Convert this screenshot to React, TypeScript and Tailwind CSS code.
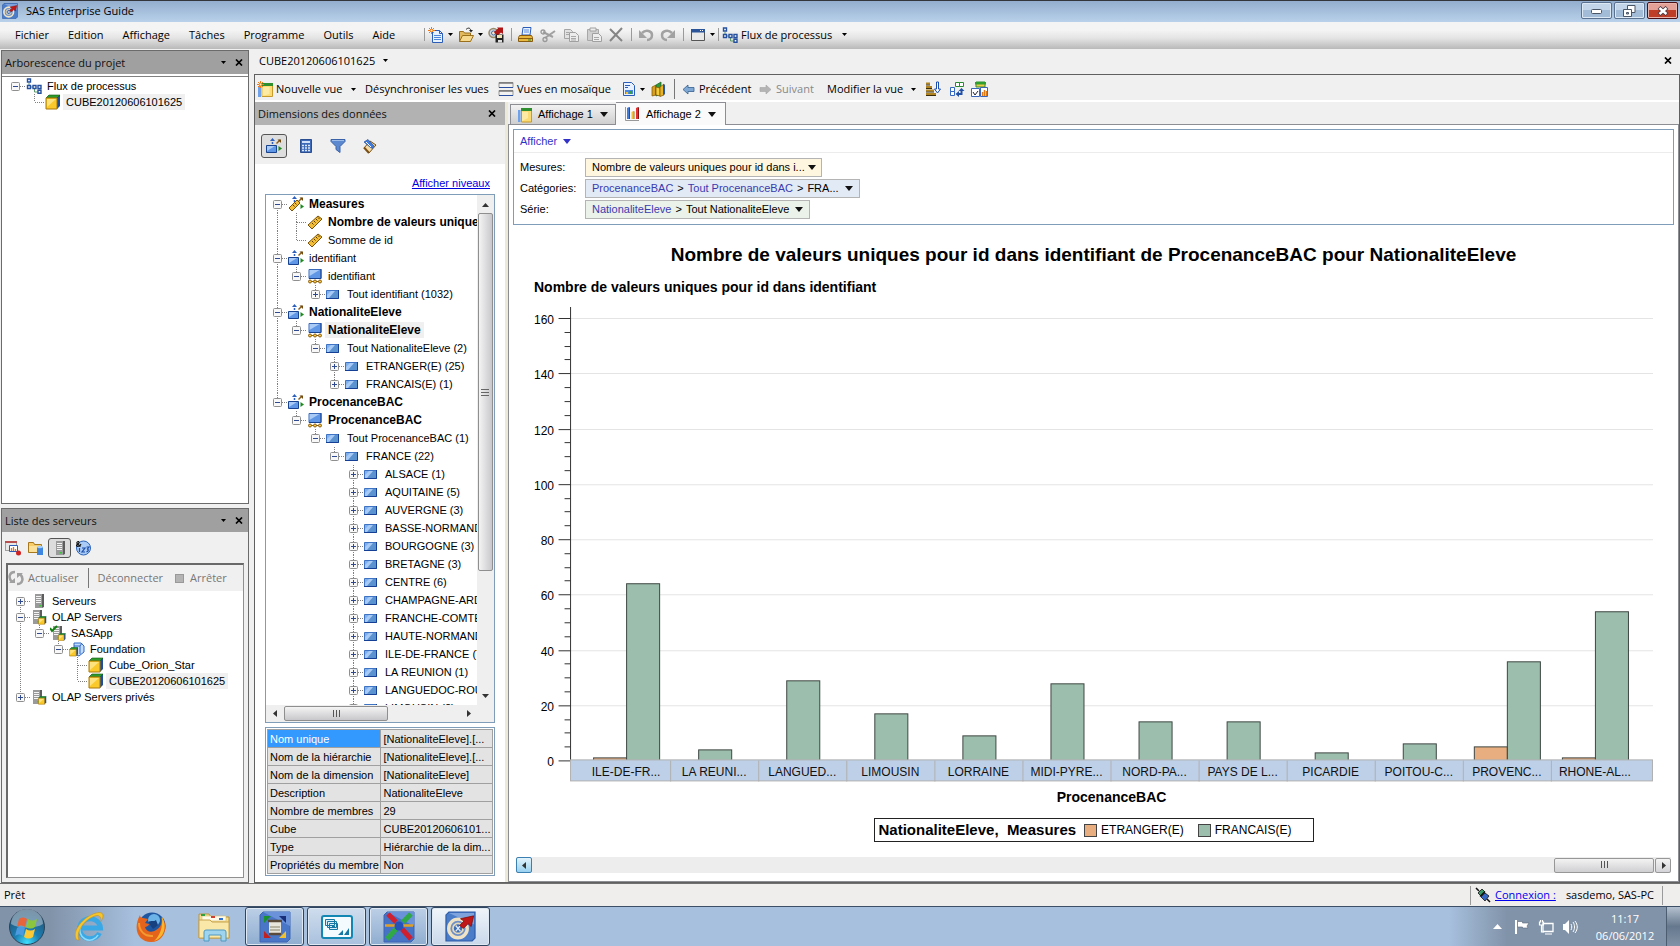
import React from "react";

type P = { children?: React.ReactNode };
type IconProps = { w?: number; h?: number; children: React.ReactNode };

const SEGOE = "font-['Open_Sans','Noto_Sans',sans-serif]";

function Svg({ w = 16, h = 16, children }: IconProps) {
  return (
    <svg width={w} height={h} viewBox={`0 0 ${w} ${h}`} className="block shrink-0" aria-hidden="true">
      {children}
    </svg>
  );
}

/* ---------- small glyphs ---------- */

const Caret = () => (
  <Svg w={5} h={3}><path d="M0 0h5L2.500 3z" fill="#000" /></Svg>
);
const BigCaret = ({ color = "#111" }: { color?: string }) => (
  <Svg w={8} h={5}><path d="M0 0h8L4 5z" fill={color} /></Svg>
);
const Cross = () => (
  <Svg w={8} h={7}><path d="M1 .5l6 6M7 .5l-6 6" stroke="#000" strokeWidth="1.700" /></Svg>
);
const Grip = ({ vertical = false }: { vertical?: boolean }) => (
  <Svg w={8} h={8}>
    {vertical ? (
      <path d="M0 1.500h8M0 4.500h8M0 7.500h8" stroke="#666" />
    ) : (
      <path d="M1.500 0v7M4.500 0v7M7.500 0v7" stroke="#555" />
    )}
  </Svg>
);
const Arrow = ({ dir }: { dir: "up" | "down" | "left" | "right" }) => {
  const d = { up: "M0 6l3.500-4L7 6z", down: "M0 1h7L3.500 5z", left: "M5 0v7L1 3.500z", right: "M2 0v7l4-3.500z" }[dir];
  return <Svg w={7} h={7}><path d={d} fill="#333" /></Svg>;
};

/* ---------- toolbar icons ---------- */

const Spark = () => (
  <g stroke="#f07818" strokeWidth="1"><path d="M3.500 0v7M0 3.500h7M1 1l5 5M6 1l-5 5" /><circle cx="3.500" cy="3.500" r="1" fill="#fff4b0" stroke="none" /></g>
);
const IcSas = ({ s = 16 }: { s?: number }) => (
  <svg width={s} height={s} viewBox="0 0 16 16" className="block shrink-0" aria-hidden="true">
    <path d="M2 .5h13.500V14l-1.500 1.500H.5V2z" fill="#4a7cc8" stroke="#2d5ba8" strokeWidth=".6" />
    <path d="M2 1h13v6z" fill="#7fa3dc" />
    <circle cx="6.700" cy="9" r="4.800" fill="#6f90c6" stroke="#efe3c6" strokeWidth="1.700" />
    <circle cx="6.700" cy="9" r="2.600" fill="#3f6fb5" stroke="#e6d9b8" strokeWidth=".9" />
    <path d="M5.500 7.500l2.500 3M8 7.500l-2.500 3" stroke="#dfe8f6" strokeWidth=".7" />
    <path d="M7.500 7.500l2.300-2.300L8 4l6.800-1.500L13.500 8l-1.600-1.400L9.500 9z" fill="#c01818" stroke="#7d0c0c" strokeWidth=".4" />
  </svg>
);
const IcNew = () => (
  <Svg><path d="M4.500 3.500h7l3 3v9h-10z" fill="#e8f1ff" stroke="#2a5cb8" /><path d="M11.500 3.500v3h3" fill="none" stroke="#2a5cb8" /><path d="M6 8.500h7M6 10.500h7M6 12.500h7" stroke="#4f86d8" /><Spark /></Svg>
);
const IcOpen = () => (
  <Svg><path d="M1.500 14.500v-10h4l1 1.500h6v8z" fill="#e2b95c" stroke="#9a6f1c" /><path d="M1.500 14.500l3-6h11l-3 6z" fill="#f6d98c" stroke="#9a6f1c" /><path d="M8 2.500c2-2 4-2 5 1" stroke="#222" fill="none" /><path d="M11 3h4l-2 2.500z" fill="#222" /></Svg>
);
const IcSave = () => (
  <Svg><circle cx="5.500" cy="6" r="4.500" fill="#c6d2e6" stroke="#9a8a68" strokeWidth="1.500" /><circle cx="5.500" cy="6" r="2" fill="#f0e6cc" stroke="#54719c" /><path d="M6 5l4-3.500-1-1h6V7l-2-1.500L9 9z" fill="#b01515" /><path d="M7.500 7.500h8v8h-8z" fill="#222" /><path d="M9 8h5v3H9z" fill="#f3e4b4" /><path d="M10 13h4v2.500h-4z" fill="#ddd" /></Svg>
);
const IcPrint = () => (
  <Svg><path d="M4 8l1-7.500h8L12 8z" fill="#e9f2ff" stroke="#2a5cb8" /><path d="M6 3h5M6 5h5" stroke="#5a8ce0" /><path d="M1.500 8.500h12l1 2v4h-14v-4z" fill="#e9b83e" stroke="#8a5c10" /><path d="M1 11.500h13" stroke="#8a5c10" /><path d="M10 13h3" stroke="#3a8a2a" /></Svg>
);
const IcCut = () => (
  <Svg><path d="M3 5l10 5M15 4L5 11" stroke="#a0a0a0" strokeWidth="2" /><circle cx="3" cy="5" r="2" fill="none" stroke="#999" strokeWidth="1.300" /><circle cx="5" cy="12.500" r="2" fill="none" stroke="#999" strokeWidth="1.300" /></Svg>
);
const IcCopy = () => (
  <Svg><path d="M1.500 2.500h6l2 2v7h-8z" fill="#e2e2e2" stroke="#a5a5a5" /><path d="M6.500 5.500h6l3 3v6h-9z" fill="#ececec" stroke="#a0a0a0" /><path d="M3 5.500h3M3 7.500h3M8 9.500h5M8 11.500h5M8 13h5" stroke="#a8a8a8" /></Svg>
);
const IcPaste = () => (
  <Svg><path d="M1.500 2.500h11v11h-11z" fill="#cfcfcf" stroke="#a8a8a8" /><path d="M4 1h6v3H4z" fill="#ededed" stroke="#a0a0a0" /><path d="M6.500 6.500h6l3 3v5h-9z" fill="#ededed" stroke="#a0a0a0" /><path d="M8 10.500h5M8 12.500h5" stroke="#a8a8a8" /></Svg>
);
const IcDelete = () => <Svg><path d="M2 2l12 12M14 1L2 14" stroke="#858585" strokeWidth="2" /></Svg>;
const IcUndo = ({ flip = false }: { flip?: boolean }) => (
  <Svg><g transform={flip ? "translate(16 0) scale(-1 1)" : undefined}><path d="M4 6c4-4 10-2 10 2 0 3-2 5-5 5" fill="none" stroke="#a2a2a2" strokeWidth="2.500" /><path d="M1 3v8h8z" fill="#a2a2a2" /></g></Svg>
);
const IcWindow = () => (
  <Svg><path d="M1.500 2.500h13v11h-13z" fill="#e9e9e9" stroke="#555" /><path d="M1 2h14v3.500H1z" fill="#2c5599" /><path d="M10 3.500h4" stroke="#fff" strokeDasharray="1 1" /></Svg>
);
const IcFlow = () => (
  <Svg><path d="M3 5v4h5M8.500 10v4h4" fill="none" stroke="#5d9a6a" /><g fill="#fff" stroke="#24509f" strokeWidth="1.400"><path d="M1.500 1h3v3h-3zM1.500 7.500h3v3h-3zM7 7.500h3v3H7zM12 7.500h3v3h-3zM12 12.200h3v3h-3z" /></g></Svg>
);
const IcNewView = () => (
  <Svg><path d="M5 3.500h10.500v12H5z" fill="#fbdc74" stroke="#c79b2c" /><path d="M5.500 6h7v7l-7 2z" fill="#fdeaa4" /><path d="M5 2h11v3H5z" fill="#2f8f2f" /><path d="M1 5h3v11H1z" fill="#6fa2ea" /><Spark /></Svg>
);
const IcMosaic = () => (
  <Svg><path d="M1 1.500h14v5H1zM1 9.500h14v5H1z" fill="#f2f2f2" stroke="#9a9a9a" /><path d="M1 2h14M1 10h14" stroke="#777" strokeWidth="1.500" /><path d="M1 6.500h14M1 14.500h14" stroke="#2b4fa0" /></Svg>
);
const IcReport = () => (
  <Svg w={14}><path d="M1.500 1.500h8l3 3v10h-11z" fill="#e8f1ff" stroke="#2a5cb8" /><path d="M3 4.500h5M3 6.500h3" stroke="#2a5cb8" /><path d="M3 9h8v4H3z" fill="#4a86e0" /><path d="M4 11h2v2H4z" fill="#f0c030" /><path d="M7 10h3v3H7z" fill="#38a038" /></Svg>
);
const IcBooks = () => (
  <Svg><path d="M1 6l4-2v10l-4 1z" fill="#d8a020" stroke="#7a5200" strokeWidth=".7" /><path d="M5 4l5-3v12l-5 2z" fill="#2f9a3a" stroke="#14601c" strokeWidth=".7" /><path d="M5 6l4 1v8l-4-1z" fill="#f4cc3c" stroke="#7a5200" strokeWidth=".7" /><path d="M9 6l4-3v11l-4 1.500z" fill="#e8b428" stroke="#7a5200" strokeWidth=".7" /><path d="M12 3l2 1v9l-2 1z" fill="#2a58a8" /></Svg>
);
const IcArrow = ({ right = false }: { right?: boolean }) => (
  <Svg w={13} h={12}>
    {right ? <path d="M12 6.500L7 2v2.500H1v4h6V11z" fill="#b4b4b4" stroke="#a5a5a5" strokeWidth=".6" /> : <path d="M1 6.500L6 2v2.500h6v4H6V11z" fill="#7fa9d4" stroke="#33608f" strokeWidth=".8" />}
  </Svg>
);
const IcSort = () => (
  <Svg><path d="M1 2.500h4M1 6h6M1 9.500h8M1 13h10" stroke="#b08420" strokeWidth="2" /><path d="M1 4h4M1 7.500h6M1 11h8M1 14.500h10" stroke="#3c2c08" strokeWidth="1" /><path d="M11.500 1h2v7h2l-3 4-3-4h2z" fill="#fff" stroke="#1a4cae" /></Svg>
);
const IcSwap = () => (
  <Svg><g fill="#fff" stroke="#2a8a32"><path d="M6.500 1.500h4v4h-4zM10.500 1.500h4v4h-4z" /></g><g fill="#fff" stroke="#3468c4"><path d="M1.500 6.500h4v4h-4zM1.500 10.500h4v4h-4z" /></g><path d="M8 13h4.500V9" stroke="#2250a8" strokeWidth="2" fill="none" /><path d="M10 10v6l-3.500-3zM9.500 10h6l-3-3z" fill="#2250a8" /></Svg>
);
const IcViews = () => (
  <Svg w={17}><path d="M5 1h9v5H5z" fill="#f0c848" stroke="#2f8f2f" /><path d="M4 1h11v2.500H4z" fill="#2fa02f" /><path d="M.5 7.500h8v8h-8zM9.500 6.500h7v9h-7z" fill="#fff" stroke="#3b65b8" /><path d="M2 11l2 3 3-4" stroke="#223" fill="none" /><path d="M11.500 15v-4M13.500 15V9M15.500 15v-5" stroke="#e07818" strokeWidth="1.500" /></Svg>
);

/* ---------- tree icons ---------- */

const Box = ({ x = 0, y = 0, s = 1 }: { x?: number; y?: number; s?: number }) => (
  <g transform={`translate(${x} ${y}) scale(${s})`}>
    <path d="M1 4l3-3h11v11l-3 3z" fill="#1f4f9a" />
    <path d="M1 4l3-3h11l-3 3z" fill="#2d9a2d" stroke="#125c12" strokeWidth=".6" />
    <path d="M1 4h11v11H1z" fill="#fbc92a" stroke="#a87808" />
    <path d="M2 5h9L2 13z" fill="#fde27e" />
  </g>
);
const IcCube = () => <Svg><Box /></Svg>;
const Tower = ({ x = 0 }: { x?: number }) => (
  <g transform={`translate(${x} 0)`}>
    <path d="M1 1h7v14H1z" fill="#9a9a9a" /><path d="M8 1h2v13l-2 1z" fill="#5d5d5d" />
    <path d="M2 3.500h5M2 5.500h5M2 7.500h5M2 9.500h5" stroke="#f4f4f4" /><path d="M5 12h2v1.500H5z" fill="#2fd02f" />
  </g>
);
const IcServer = () => <Svg><Tower x={3} /></Svg>;
const IcOlap = () => <Svg><Tower x={1} /><Box x={7} y={7} s={0.550} /></Svg>;
const IcOlapOk = () => <Svg><Tower x={2} /><Box x={8} y={8} s={0.500} /><path d="M0 3l2 3 5-5" stroke="#108010" strokeWidth="2" fill="none" /></Svg>;
const IcFound = () => (
  <Svg><path d="M5 2h7l3 3v6l-5 4-5-2z" fill="#c4dcff" stroke="#2f69c4" /><path d="M5 5h6l2-3M11 5v8" stroke="#2f69c4" fill="none" /><Box x={0} y={6} s={0.600} /></Svg>
);
const IcRuler = () => (
  <Svg><path d="M1 11L11 2l4 3L5 15z" fill="#f2bd38" stroke="#7a5208" /><path d="M5 9l1.500 1.500M7 7l1.500 1.500M9 5l1.500 1.500M11 3.500l1.500 1.500" stroke="#5a3a00" /></Svg>
);
const Axes = () => (
  <g>
    <path d="M6.500 6V2" stroke="#2b5fc0" strokeWidth="1.500" strokeDasharray="2 1" />
    <path d="M4 3l2.500-3L9 3z" fill="#2b5fc0" />
    <path d="M10.500 5.500L14 2" stroke="#8a5c18" strokeWidth="1.500" />
    <path d="M11.500 1.500H15V5z" fill="#704a10" />
    <path d="M12.500 8l3.500 2.500-3.500 2.500z" fill="#1c8a1c" />
  </g>
);
const IcMeasure = () => (
  <Svg><Axes /><path d="M1 12L9 4l3 3-8 8z" fill="#f2bd38" stroke="#7a5208" /><path d="M5 9l1.500 1.500M7 7l1.500 1.500" stroke="#5a3a00" /></Svg>
);
const IcDim = () => (
  <Svg><Axes /><path d="M.5 7.500h10v7H.5z" fill="#5f97e6" stroke="#174390" /><path d="M1 8h8l-8 5z" fill="#a9cbf6" /></Svg>
);
const IcHier = () => (
  <Svg><path d="M2 1.500h12v9H2z" fill="#5f97e6" stroke="#3a68b8" /><path d="M2 10.500h12V1" stroke="#174390" fill="none" /><path d="M2.500 2h10l-10 6z" fill="#a9cbf6" /><path d="M2 13.500h12" stroke="#8a5c10" /><g fill="#f6c848" stroke="#8a5c10"><circle cx="3" cy="13.500" r="1.500" /><circle cx="8" cy="13.500" r="1.500" /><circle cx="13" cy="13.500" r="1.500" /></g></Svg>
);
const IcMember = () => (
  <Svg w={13} h={9}><path d="M.5.5h12v8H.5z" fill="#5b93d0" stroke="#3f74c4" /><path d="M0 8.500h12.500V0" fill="none" stroke="#153f94" /><path d="M1 1h8L3 8H1z" fill="#a7cbf6" /><path d="M1 1h4L1 5z" fill="#7fb0ec" /></Svg>
);

/* ---------- tree ---------- */

type Node = { l: number; t: string; i: React.ReactNode; e?: "+" | "-"; b?: boolean; s?: boolean };

function Guide({ h, up, down, mid, exp }: { h: number; up: boolean; down: boolean; mid: boolean; exp?: string }) {
  const c = h / 2;
  return (
    <Svg w={19} h={h}>
      <g stroke="#808080" strokeDasharray="1 1" shapeRendering="crispEdges">
        {up && <path d={`M9.500 0V${c}`} />}
        {down && <path d={`M9.500 ${c}V${h}`} />}
        {mid && <path d={`M9.500 ${c + 0.5}H19`} />}
      </g>
      {exp && (
        <g>
          <rect x="5.500" y={c - 3.5} width="8" height="8" rx="1" fill="#f8f8f8" stroke="#8f8f8f" />
          <path d={`M7 ${c + 0.5}h5`} stroke="#2f4a90" />
          {exp === "+" && <path d={`M9.500 ${c - 2}v5`} stroke="#2f4a90" />}
        </g>
      )}
    </Svg>
  );
}

function Tree({ rows, tall = false, label }: { rows: Node[]; tall?: boolean; label: string }) {
  const h = tall ? 18 : 16;
  const more = (i: number, l: number) => {
    for (let j = i + 1; j < rows.length; j++) {
      if (rows[j].l < l) return false;
      if (rows[j].l === l) return true;
    }
    return false;
  };
  return (
    <ul role="tree" aria-label={label} className="text-[11px] leading-4 text-black">
      {rows.map((r, i) => (
        <li key={i} role="treeitem" className={`flex items-center whitespace-nowrap ${tall ? "h-[18px]" : "h-4"}`}>
          {Array.from({ length: r.l }, (_, k) => (
            <Guide key={k} h={h} up={more(i, k)} down={more(i, k)} mid={false} />
          ))}
          <Guide h={h} up={i > 0} down={more(i, r.l)} mid exp={r.e} />
          <span className="flex w-[19px] shrink-0 justify-start pl-px">{r.i}</span>
          <span className={`px-[3px] ${r.b ? "text-[12px] font-bold" : ""} ${r.s ? "bg-[#f0f0f0]" : ""}`}>{r.t}</span>
        </li>
      ))}
    </ul>
  );
}

const projectRows: Node[] = [
  { l: 0, t: "Flux de processus", i: <IcFlow />, e: "-" },
  { l: 1, t: "CUBE20120606101625", i: <IcCube />, s: true },
];

const serverRows: Node[] = [
  { l: 0, t: "Serveurs", i: <IcServer />, e: "+" },
  { l: 0, t: "OLAP Servers", i: <IcOlap />, e: "-" },
  { l: 1, t: "SASApp", i: <IcOlapOk />, e: "-" },
  { l: 2, t: "Foundation", i: <IcFound />, e: "-" },
  { l: 3, t: "Cube_Orion_Star", i: <IcCube /> },
  { l: 3, t: "CUBE20120606101625", i: <IcCube />, s: true },
  { l: 0, t: "OLAP Servers privés", i: <IcOlap />, e: "+" },
];

const regions = ["ALSACE (1)", "AQUITAINE (5)", "AUVERGNE (3)", "BASSE-NORMANDIE (3)", "BOURGOGNE (3)", "BRETAGNE (3)", "CENTRE (6)", "CHAMPAGNE-ARDENNE (3)", "FRANCHE-COMTE (3)", "HAUTE-NORMANDIE (2)", "ILE-DE-FRANCE (7)", "LA REUNION (1)", "LANGUEDOC-ROUSSILLON (4)", "LIMOUSIN (2)"];

const dimRows: Node[] = [
  { l: 0, t: "Measures", i: <IcMeasure />, e: "-", b: true },
  { l: 1, t: "Nombre de valeurs uniques", i: <IcRuler />, b: true },
  { l: 1, t: "Somme de id", i: <IcRuler /> },
  { l: 0, t: "identifiant", i: <IcDim />, e: "-" },
  { l: 1, t: "identifiant", i: <IcHier />, e: "-" },
  { l: 2, t: "Tout identifiant (1032)", i: <IcMember />, e: "+" },
  { l: 0, t: "NationaliteEleve", i: <IcDim />, e: "-", b: true },
  { l: 1, t: "NationaliteEleve", i: <IcHier />, e: "-", b: true, s: true },
  { l: 2, t: "Tout NationaliteEleve (2)", i: <IcMember />, e: "-" },
  { l: 3, t: "ETRANGER(E) (25)", i: <IcMember />, e: "+" },
  { l: 3, t: "FRANCAIS(E) (1)", i: <IcMember />, e: "+" },
  { l: 0, t: "ProcenanceBAC", i: <IcDim />, e: "-", b: true },
  { l: 1, t: "ProcenanceBAC", i: <IcHier />, e: "-", b: true },
  { l: 2, t: "Tout ProcenanceBAC (1)", i: <IcMember />, e: "-" },
  { l: 3, t: "FRANCE (22)", i: <IcMember />, e: "-" },
  ...regions.map((t): Node => ({ l: 4, t, i: <IcMember />, e: "+" })),
];

/* ---------- frame parts ---------- */

const Sep = () => <span className="h-[13px] w-px shrink-0 bg-[#9a9a9a]" />;

function Tool({ label, children, w = "w-[22px]" }: P & { label: string; w?: string }) {
  return <button type="button" aria-label={label} className={`flex h-6 shrink-0 items-center justify-center gap-1 ${w}`}>{children}</button>;
}

function TitleBar() {
  const frame = "flex h-[17px] w-[31px] items-center justify-center rounded-[2px] border";
  return (
    <header className="flex h-[22px] shrink-0 items-center border-t border-[#33363b] bg-linear-to-b from-[#93aece] to-[#b9d1ea] px-0.5 pb-0.5">
      <IcSas />
      <h1 className="ml-2 flex-1 text-[11px] leading-4">SAS Enterprise Guide</h1>
      <div className="flex gap-0.5">
        <button type="button" aria-label="Réduire" className={`${frame} border-[#5a7290] bg-linear-to-b from-[#c3d5e9] from-50% to-[#a2bcd8] to-50% shadow-[inset_0_0_0_1px_#dce8f4]`}>
          <Svg w={12} h={8}><rect x=".5" y="2.500" width="10" height="4" rx="1" fill="#fff" stroke="#4a5566" /></Svg>
        </button>
        <button type="button" aria-label="Restaurer" className={`${frame} border-[#5a7290] bg-linear-to-b from-[#c3d5e9] from-50% to-[#a2bcd8] to-50% shadow-[inset_0_0_0_1px_#dce8f4]`}>
          <Svg w={13} h={12}><path d="M4.500.5h7.500v7H4.500z" fill="#fff" stroke="#4a5566" /><path d="M.5 4.500h8v7h-8z" fill="#fff" stroke="#4a5566" /><path d="M3.500 7.500h2v1.500h-2z" fill="#a2bcd8" stroke="#4a5566" /></Svg>
        </button>
        <button type="button" aria-label="Fermer" className={`${frame} border-[#4a1015] bg-linear-to-b from-[#e3a097] from-45% to-[#bd3d27] to-50% shadow-[inset_0_0_0_1px_#e8b4ac]`}>
          <Svg w={12} h={10}><path d="M2 1.500l8 7M10 1.500l-8 7" stroke="#4a3a44" strokeWidth="4.200" /><path d="M2.500 2l7 6M9.500 2l-7 6" stroke="#fff" strokeWidth="2.400" /></Svg>
        </button>
      </div>
    </header>
  );
}

function MenuBar() {
  const menus = ["Fichier", "Edition", "Affichage", "Tâches", "Programme", "Outils", "Aide"];
  return (
    <nav className="flex h-[27px] shrink-0 items-center bg-linear-to-b from-[#f4f4f4] from-30% via-[#e4e4e4] via-60% to-[#b9b9b9] pb-0.5 text-[11px]">
      <div className="flex w-[424px] shrink-0 gap-[19px] pl-[15px]">
        {menus.map((m) => <button key={m} type="button" className="leading-4">{m}</button>)}
      </div>
      <Sep />
      <Tool label="Nouveau" w="w-[30px]"><IcNew /><Caret /></Tool>
      <Tool label="Ouvrir" w="w-[30px]"><IcOpen /><Caret /></Tool>
      <Tool label="Enregistrer"><IcSave /></Tool>
      <span className="w-1" /><Sep />
      <span className="w-[3px]" />
      <Tool label="Imprimer"><IcPrint /></Tool>
      <Tool label="Couper"><IcCut /></Tool>
      <Tool label="Copier" w="w-6"><IcCopy /></Tool>
      <Tool label="Coller"><IcPaste /></Tool>
      <Tool label="Supprimer"><IcDelete /></Tool>
      <span className="w-1" /><Sep />
      <span className="w-[3px]" />
      <Tool label="Annuler"><IcUndo /></Tool>
      <Tool label="Rétablir"><IcUndo flip /></Tool>
      <span className="w-1" /><Sep />
      <span className="w-1" />
      <Tool label="Fenêtres" w="w-[28px]"><IcWindow /><Caret /></Tool>
      <span className="w-0.5" /><Sep />
      <button type="button" className="ml-[3px] flex items-center gap-[3px] leading-4"><IcFlow />Flux de processus<span className="ml-[7px]"><Caret /></span></button>
    </nav>
  );
}

function PanelHead({ title, caret = true, tone = "bg-[#a0a0a0] pr-1" }: { title: string; caret?: boolean; tone?: string }) {
  return (
    <div className={`flex h-[23px] shrink-0 items-center gap-2 pl-[3px] ${tone}`}>
      <h2 className="flex-1 text-[11px] leading-4 text-[#111]">{title}</h2>
      {caret && <button type="button" aria-label={`Options ${title}`}><Caret /></button>}
      <button type="button" aria-label={`Fermer ${title}`} className="px-px"><Cross /></button>
    </div>
  );
}

function LeftColumn() {
  return (
    <aside className="flex w-[249px] shrink-0 flex-col gap-1 pt-px pl-px">
      <section className="flex min-h-0 flex-[453] flex-col border border-[#6b6b6b] bg-white">
        <PanelHead title="Arborescence du projet" />
        <div className="mt-0.5 flex-1 border-t border-[#808080] pt-px pl-1 font-['Liberation_Sans',Arial,sans-serif]">
          <Tree rows={projectRows} label="Projet" />
        </div>
      </section>
      <section className="flex min-h-0 flex-[373] flex-col border border-[#6b6b6b] bg-[#f0f0f0]">
        <PanelHead title="Liste des serveurs" />
        <div className="flex h-[29px] shrink-0 items-center gap-[7px] pt-0.5 pl-[3px]">
          <button type="button" aria-label="Tâches"><Svg><path d="M.5 1.500h11v9H.5z" fill="#e8e8e8" stroke="#555" strokeDasharray="1 1" /><path d="M0 1h12v2H0z" fill="#b85050" /><path d="M4.500 5.500h8v6h-8z" fill="#fff" stroke="#2a5cb8" /><path d="M6.500 11V8M8.500 11V7M10.500 11V9" stroke="#e07818" strokeWidth="1.300" /><circle cx="13.500" cy="13" r="2.500" fill="#d02020" /></Svg></button>
          <button type="button" aria-label="Dossiers"><Svg><path d="M.5 12.500v-10h5l1 2h7v8z" fill="#f6cd68" stroke="#a8781c" /><path d="M1 6h12v6H1z" fill="#fbe09a" /><path d="M9 7h6v8H9z" fill="#3f86e0" /><ellipse cx="12" cy="7" rx="3" ry="1.300" fill="#a8cdf8" /></Svg></button>
          <button type="button" aria-label="Serveurs" aria-pressed="true" className="-mx-[3px] flex h-5 w-[23px] items-center justify-center rounded-[3px] border border-[#555] bg-[#dcdcdc]"><IcServer /></button>
          <button type="button" aria-label="Invites"><Svg><circle cx="8.500" cy="8" r="7" fill="#a9cbf5" stroke="#2c62b8" /><path d="M4.500 8v4M7 8h3l-3 4h3M11.500 7h2.500l-1.500 2q2 1.500-1 3" stroke="#1d4eaa" fill="none" strokeWidth="1.200" /><path d="M5.500 6.500L2 3.500C1 2 4 .5 4 2.500S1 4 1.500 5.500 5 6.500 6 4" stroke="#111" fill="none" strokeWidth="1.100" /></Svg></button>
        </div>
        <div className="mx-1 mt-0.5 mb-1 flex flex-1 flex-col border-t-2 border-r border-b border-l-2 border-[#696969] border-r-[#909090] border-b-[#909090] bg-white">
          <div className="flex h-[26px] shrink-0 items-center bg-[#f0f0f0] text-[11px] text-[#777]">
            <button type="button" className="flex items-center gap-1 pr-2.5"><Svg><path d="M7 2C1 2 0 8 4 12M9 14c6 0 7-6 3-10" fill="none" stroke="#a0a0a0" strokeWidth="2.500" /><path d="M1 13h6V8zM15 3H9v5z" fill="#a0a0a0" /></Svg>Actualiser</button>
            <span className="h-5 w-px bg-[#777]" />
            <button type="button" className="pl-2">Déconnecter</button>
            <button type="button" className="ml-3 flex items-center gap-1.5"><span className="size-[9px] border border-[#999] bg-[#b4b4b4]" />Arrêter</button>
          </div>
          <div className="pt-0.5 pl-[3px] font-['Liberation_Sans',Arial,sans-serif]"><Tree rows={serverRows} label="Serveurs" /></div>
        </div>
      </section>
    </aside>
  );
}

function ViewToolbar() {
  return (
    <div className="flex h-[27px] shrink-0 items-center border-b-2 border-white pt-[3px] pl-0.5 text-[11px]">
      <button type="button" className="flex w-[108px] shrink-0 items-center gap-[3px]"><IcNewView />Nouvelle vue<span className="ml-1.5"><Caret /></span></button>
      <button type="button" className="w-[133px] shrink-0 text-left whitespace-nowrap">Désynchroniser les vues</button>
      <button type="button" className="flex w-[124px] shrink-0 items-center gap-[3px] whitespace-nowrap"><IcMosaic />Vues en mosaïque</button>
      <Tool label="Rapport" w="w-[23px]"><IcReport /><Caret /></Tool>
      <span className="w-[3px]" />
      <Tool label="Aide en ligne"><IcBooks /></Tool>
      <span className="mx-1 h-5 w-px bg-[#777]" />
      <button type="button" className="flex w-[80px] shrink-0 items-center gap-1 pl-[3px]"><IcArrow />Précédent</button>
      <button type="button" className="flex w-[68px] shrink-0 items-center gap-1 text-[#888]"><IcArrow right />Suivant</button>
      <button type="button" className="flex w-[96px] shrink-0 items-center gap-2 whitespace-nowrap">Modifier la vue<Caret /></button>
      <Tool label="Trier" w="w-[20px]"><IcSort /></Tool>
      <span className="w-[3px]" />
      <Tool label="Pivoter"><IcSwap /></Tool>
      <Tool label="Disposition"><IcViews /></Tool>
    </div>
  );
}

const properties: [string, string][] = [
  ["Nom unique", "[NationaliteEleve].[..."],
  ["Nom de la hiérarchie", "[NationaliteEleve].[..."],
  ["Nom de la dimension", "[NationaliteEleve]"],
  ["Description", "NationaliteEleve"],
  ["Nombre de membres", "29"],
  ["Cube", "CUBE20120606101..."],
  ["Type", "Hiérarchie de la dim..."],
  ["Propriétés du membre", "Non"],
];

function DimensionsPanel() {
  const thumb = "rounded-[2px] border border-[#8f8f8f]";
  return (
    <section className="flex w-[250px] shrink-0 flex-col bg-white">
      <PanelHead title="Dimensions des données" caret={false} tone="bg-[#b2b2b2] pr-2" />
      <div className="flex h-[39px] shrink-0 items-center gap-[16px] bg-[#f0f0f0] pt-0.5 pl-1.5">
        <button type="button" aria-label="Dimensions" aria-pressed="true" className="-mr-[5px] flex h-6 w-[26px] items-center justify-center rounded-[3px] border border-[#555] bg-[#dedede]"><IcDim /></button>
        <button type="button" aria-label="Calculatrice"><Svg><path d="M2.500 1.500h11v13h-11z" fill="#3d6ab8" stroke="#2a4e90" /><path d="M4 3h8v2H4z" fill="#cfe0f8" /><path d="M4 7.500h8M4 10h8M4 12.500h8" stroke="#dbe8fa" strokeWidth="1.500" strokeDasharray="2 1" /></Svg></button>
        <button type="button" aria-label="Filtre"><Svg><path d="M1 1.500h14v2L10 8.500v6l-4-3v-3L1 3.500z" fill="#5c88d0" stroke="#3a62a8" /><path d="M2 2.500h12" stroke="#9dbce8" /></Svg></button>
        <button type="button" aria-label="Signet"><Svg><path d="M8 3l6 4-7 8-5-5z" fill="#f4dca4" stroke="#7a4e14" /><path d="M2 9.500l5 5.500" stroke="#7a4e14" strokeWidth="2" /><path d="M2 4l4-2.500L12 8l-1.500 2.500-2-1z" fill="#3f7cdc" stroke="#24509f" strokeWidth=".7" /><path d="M4 4l5 5" stroke="#fff" /></Svg></button>
      </div>
      <div className="flex h-[30px] shrink-0 items-center justify-end pt-2 pr-[15px] font-['Liberation_Sans',Arial,sans-serif]">
        <a href="#niveaux" className="text-[11px] text-[#0000e0] underline">Afficher niveaux</a>
      </div>
      <div className="mr-2.5 ml-2.5 flex min-h-0 flex-1 flex-col border border-[#7f9db9] font-['Liberation_Sans',Arial,sans-serif]">
        <div className="flex min-h-0 flex-1">
          <div className="h-0 min-h-full flex-1 overflow-hidden pl-0.5"><Tree rows={dimRows} tall label="Dimensions" /></div>
          <div className="flex w-[17px] shrink-0 flex-col items-center bg-[#efefef] pr-px">
            <span className="flex h-[18px] items-center"><Arrow dir="up" /></span>
            <div className={`flex w-[15px] flex-[358] items-center justify-center bg-linear-to-r from-[#f4f4f4] to-[#c8c8cc] ${thumb}`}><Grip vertical /></div>
            <span className="flex-[117]" />
            <span className="flex h-[18px] items-center"><Arrow dir="down" /></span>
          </div>
        </div>
        <div className="flex h-[17px] shrink-0 items-center bg-[#efefef] pr-[17px]">
          <span className="flex w-[18px] justify-center"><Arrow dir="left" /></span>
          <div className={`flex h-[15px] flex-[104] items-center justify-center bg-linear-to-b from-[#f4f4f4] to-[#c8c8cc] ${thumb}`}><Grip /></div>
          <span className="flex-[72]" />
          <span className="flex w-[18px] justify-center"><Arrow dir="right" /></span>
        </div>
      </div>
      <div className="m-2.5 mt-1 mb-1.5 border border-[#7f9db9] p-px font-['Liberation_Sans',Arial,sans-serif]">
        <table className="w-full table-fixed border-collapse text-[11px] leading-4">
          <tbody>
            {properties.map(([k, v], i) => (
              <tr key={k} className="h-[18px]">
                <th scope="row" className={`border border-[#a0a0a0] p-0 pl-0.5 text-left font-normal whitespace-nowrap ${i === 0 ? "bg-[#3399ff] text-white" : "bg-[#e3e3e3]"}`}>{k}</th>
                <td className="border border-[#a0a0a0] bg-[#e3e3e3] p-0 pl-[3px] whitespace-nowrap">{v}</td>
              </tr>
            ))}
          </tbody>
        </table>
      </div>
    </section>
  );
}

/* ---------- chart ---------- */

const data: [string, number, number][] = [
  ["ILE-DE-FR...", 1, 64], ["LA REUNI...", 0, 4], ["LANGUED...", 0, 29], ["LIMOUSIN", 0, 17], ["LORRAINE", 0, 9], ["MIDI-PYRE...", 0, 28],
  ["NORD-PA...", 0, 14], ["PAYS DE L...", 0, 14], ["PICARDIE", 0, 3], ["POITOU-C...", 0, 6], ["PROVENC...", 5, 36], ["RHONE-AL...", 1, 54],
];

function Chart() {
  const x0 = 57, x1 = 1139, base = 461, unit = 2.7625;
  const y = (v: number) => Math.round(base - v * unit) + 0.5;
  const ticks = Array.from({ length: 33 }, (_, i) => i * 5);
  return (
    <svg viewBox="0 0 1160 515" className="block h-auto w-full" role="img" aria-label="Nombre de valeurs uniques par ProcenanceBAC" fontFamily="Liberation Sans, Arial, sans-serif" fontSize="12">
      {ticks.map((v) => (
        <g key={v}>
          {v % 20 === 0 && v > 0 && <path d={`M${x0} ${y(v)}H${x1}`} stroke="#e4e4e4" />}
          <path d={`M${x0 + 0.5} ${y(v)}h${v % 20 === 0 ? -12 : -6}`} stroke="#333" />
          {v % 20 === 0 && <text x="41" y={y(v) + 5} textAnchor="end">{v}</text>}
        </g>
      ))}
      <path d={`M${x0 + 0.5} 8V${base}`} stroke="#333" />
      {data.map(([name, a, b], i) => {
        const c = 113.500 + i * 88;
        const gx = a ? c : c - 16;
        return (
          <g key={name} fill="#9cbead" stroke="#3f4743">
            {a > 0 && <rect x={c - 33} y={y(a)} width="33" height={base + 0.5 - y(a)} fill="#e8ae80" />}
            <rect x={gx} y={y(b)} width="33" height={base + 0.5 - y(b)} />
          </g>
        );
      })}
      <rect x={x0 + 0.5} y={base - 0.5} width={x1 - x0 - 1} height="21" fill="#bed0e8" stroke="#b0b0b0" />
      {data.map(([name], i) => (
        <g key={name}>
          {i > 0 && <path d={`M${69.500 + i * 88} ${base}v21`} stroke="#b0b0b0" />}
          <text x={113 + i * 88} y={base + 16} textAnchor="middle" fill="#111">{name}</text>
        </g>
      ))}
      <text x="598" y="503" textAnchor="middle" fontSize="14" fontWeight="bold">ProcenanceBAC</text>
    </svg>
  );
}

function Crumbs({ label, items, last, tone }: { label: string; items: string[]; last: string; tone: string }) {
  return (
    <div className="flex h-[21px] items-center">
      <span className="w-[65px]">{label}</span>
      <div className={`flex h-[19px] items-center gap-1 border border-[#b4b4b4] pr-1.5 pl-1.5 ${tone}`}>
        {items.map((t) => <React.Fragment key={t}><a href="#niveau" className="text-[#3a3ab0]">{t}</a><span>&gt;</span></React.Fragment>)}
        <span>{last}</span>
        <button type="button" aria-label={label} className="ml-0.5"><BigCaret /></button>
      </div>
    </div>
  );
}

function ChartPanel() {
  return (
    <section className="flex min-w-0 flex-1 flex-col border-l-[3px] border-[#ece9d8] bg-[#f0f0f0] font-['Liberation_Sans',Arial,sans-serif] text-[12px]">
      <div role="tablist" className="z-10 -mb-px flex h-[23px] shrink-0 items-end pl-0.5">
        <button type="button" role="tab" className="flex h-[21px] w-[106px] items-center gap-[5px] border border-[#8c8e94] bg-linear-to-b from-[#f2f2f2] to-[#cfcfcf] pl-1.5 text-[11px]">
          <Svg><path d="M4.500 3h10v12h-10z" fill="#fbdc74" stroke="#c79b2c" /><path d="M5 5h6v6l-6 3z" fill="#fdeaa4" /><path d="M4 1h11v3H4z" fill="#2f8f2f" /><path d="M1 3h2.500v12H1z" fill="#6fa2ea" /></Svg>
          Affichage 1<span className="ml-0.5"><BigCaret /></span>
        </button>
        <button type="button" role="tab" aria-selected="true" className="flex h-[23px] w-[110px] items-center gap-[5px] border border-b-0 border-l-0 border-[#8c8e94] bg-[#fafafa] pl-[9px] text-[11px]">
          <Svg><path d="M.5 1v13.500H14" stroke="#999" fill="none" /><path d="M2 2l2-1v12H2z" fill="#3f7ce0" /><path d="M4 1l1 .5V13H4z" fill="#1f4f9a" /><path d="M6.500 6l2-1v8h-2z" fill="#f0c040" /><path d="M8.500 5l1 .5V13h-1z" fill="#9a6f1c" /><path d="M11 2l2-1v12h-2z" fill="#e83030" /><path d="M13 1l1 .5V13h-1z" fill="#8a1414" /></Svg>
          Affichage 2<span className="ml-0.5"><BigCaret /></span>
        </button>
      </div>
      <div className="flex min-h-0 flex-1 flex-col border border-[#8c8e94] bg-white p-1 pt-1">
        <div className="h-[96px] shrink-0 border border-[#7f9db9] text-[11px]">
          <div className="flex h-[23px] items-center border-b border-[#ececec] pt-px pl-1.5">
            <button type="button" className="flex items-center gap-1.5 text-[#3232c8]">Afficher<BigCaret color="#3232c8" /></button>
          </div>
          <div className="pt-1 pl-1.5">
            <div className="flex h-[21px] items-center">
              <label htmlFor="mesures" className="w-[65px]">Mesures:</label>
              <div className="relative">
                <select id="mesures" className="h-[19px] w-[237px] appearance-none rounded-none border border-[#b4b4b4] bg-[#fff6e0] pr-0 pl-1.5">
                  <option>Nombre de valeurs uniques pour id dans i...</option>
                </select>
                <span className="pointer-events-none absolute top-[7px] right-1.5"><BigCaret /></span>
              </div>
            </div>
            <Crumbs label="Catégories:" items={["ProcenanceBAC", "Tout ProcenanceBAC"]} last="FRA..." tone="bg-[#e2eaf5]" />
            <Crumbs label="Série:" items={["NationaliteEleve"]} last="Tout NationaliteEleve" tone="bg-[#eaf2ea]" />
          </div>
        </div>
        <h2 className="mt-5 text-center text-[19px] leading-5 font-bold">Nombre de valeurs uniques pour id dans identifiant de ProcenanceBAC pour NationaliteEleve</h2>
        <h3 className="mt-3.5 pl-[21px] text-[14px] leading-4 font-bold">Nombre de valeurs uniques pour id dans identifiant</h3>
        <div className="mt-1"><Chart /></div>
        <div className="mx-auto mt-1 flex h-6 w-[440px] items-center border border-[#222] pl-1">
          <span className="text-[15px] font-bold whitespace-pre">NationaliteEleve,  Measures</span>
          <span className="ml-2 size-[13px] border border-[#444] bg-[#e8ae80]" /><span className="ml-1">ETRANGER(E)</span>
          <span className="ml-3.5 size-[13px] border border-[#444] bg-[#9cbead]" /><span className="ml-1">FRANCAIS(E)</span>
        </div>
        <div className="mx-[3px] mt-auto mb-1 flex h-4 shrink-0 items-center bg-[#ededed]">
          <button type="button" aria-label="Défiler à gauche" className="flex size-4 items-center justify-center rounded-[2px] border border-[#3c7fb1] bg-linear-to-b from-[#e3f4fc] to-[#98d1ef]"><Arrow dir="left" /></button>
          <span className="flex-1" />
          <div className="flex h-[15px] w-[100px] items-center justify-center rounded-[2px] border border-[#979797] bg-linear-to-b from-[#f3f3f3] to-[#cfcfd2]"><Grip /></div>
          <button type="button" aria-label="Défiler à droite" className="ml-px flex h-[15px] w-4 items-center justify-center rounded-[2px] border border-[#979797] bg-linear-to-b from-[#f3f3f3] to-[#d4d4d8]"><Arrow dir="right" /></button>
        </div>
      </div>
    </section>
  );
}

function StatusBar() {
  return (
    <footer className="flex h-[23px] shrink-0 items-center border-t border-[#6f6f6f] bg-[#f0eded] pr-[17px] text-[11px]">
      <span className="flex-1 pl-1">Prêt</span>
      <div className="flex h-[19px] items-center border-x border-[#9a9a9a] pr-2 pl-1">
        <Svg><path d="M1 1l3 3M12 12l3 3" stroke="#111" strokeWidth="1.500" /><path d="M3 6l4-4 3 3-4 4z" fill="#3a9a6a" stroke="#111" strokeWidth=".8" /><path d="M6 10l4-4 4 3-4 5z" fill="#3468c4" stroke="#111" strokeWidth=".8" /><path d="M5 9.500l5-5" stroke="#111" strokeWidth="1.500" /></Svg>
        <a href="#connexion" className="ml-1 text-[#0000ee] underline">Connexion :</a>
        <span className="ml-2.5">sasdemo, SAS-PC</span>
      </div>
    </footer>
  );
}

function Taskbar() {
  const open = "flex h-[39px] w-[59px] items-center justify-center rounded-[3px] border border-[#2f4560] shadow-[inset_0_0_0_1px_#dfe9f4]";
  return (
    <div className="flex h-10 shrink-0 items-center border-t border-[#3d4f66] bg-linear-to-r from-[#8193a9] from-3% via-[#a7c0de] via-8% to-[#a7c0de]">
      <button type="button" aria-label="Démarrer" className="ml-2">
        <Svg w={38} h={38}>
          <defs><radialGradient id="orb" cx=".5" cy=".95" r=".9"><stop offset="0" stopColor="#3fe0ff" /><stop offset=".4" stopColor="#1c7fb4" /><stop offset="1" stopColor="#23506f" /></radialGradient></defs>
          <circle cx="19" cy="19" r="17.500" fill="url(#orb)" stroke="#2a4258" />
          <path d="M3 16a16 15 0 0132 0c-8 5-24 5-32 0z" fill="#a9bccb" opacity=".65" />
          <path d="M11 11c3-2 5-2 8 0l-2 8c-3-2-5-2-8 0z" fill="#e8643a" /><path d="M20 11c3 2 6 2 9 0l-2 8c-3 2-6 2-9 0z" fill="#8cc63e" />
          <path d="M9 20c3-2 5-2 8 0l-2 8c-3-2-5-2-8 0z" fill="#4c9ae0" /><path d="M18 21c3 2 6 2 9 0l-2 8c-3 2-6 2-9 0z" fill="#fbc836" />
        </Svg>
      </button>
      <button type="button" aria-label="Internet Explorer" className="ml-[27px]">
        <Svg w={32} h={34}>
          <path d="M26.500 23A10.500 10 0 1127.500 18H9" fill="none" stroke="#3ba8e6" strokeWidth="5" /><path d="M25 25A9.500 9.500 0 118 16" fill="none" stroke="#8fdcfb" strokeWidth="1.500" />
          <path d="M4 30C-3 22 12 4 26 2.500c5 0 5 4 2 9 .5-4-1-6-4-6C14 7 2 21 6 30z" fill="#f6c62c" stroke="#c8921a" strokeWidth=".6" />
        </Svg>
      </button>
      <button type="button" aria-label="Firefox" className="ml-[30px]">
        <Svg w={32} h={32}>
          <circle cx="17" cy="15" r="13.500" fill="#1f56a0" /><circle cx="19" cy="9" r="6" fill="#6cb4e8" /><path d="M13 11c3-2 6 0 8-2l2 5-5 4z" fill="#17407e" />
          <path d="M5 4c0 2 1 3 3 3l5 1-3 4 4 1c0 2-3 3-4 3 1 5 7 6 11 3 4-2 7-7 5-13 8 6 5 25-10 25C4 31-3 19 5 4z" fill="#e4641c" />
          <path d="M27 6c5 8 3 21-8 24 6-5 9-14 8-24z" fill="#f9b52c" /><path d="M4 12c0 8 6 14 14 13" stroke="#f39a30" strokeWidth="2" fill="none" />
        </Svg>
      </button>
      <button type="button" aria-label="Explorateur" className="ml-[30px]">
        <Svg w={34} h={32}>
          <path d="M2 27V3h10l2 3h18v21z" fill="#f4dc8c" stroke="#b89440" /><path d="M5 5h24v5H5z" fill="#fffbe8" stroke="#d4bc70" strokeWidth=".6" /><path d="M4 3h4v2H4z" fill="#30a040" /><path d="M14 5h4v2h-4z" fill="#d04030" /><path d="M22 7h4v2h-4z" fill="#3070d0" />
          <path d="M2 27V9h11l2 2h17v16z" fill="#f9e8a8" stroke="#c8a450" /><path d="M7 30V21q0-2 2-2h18q2 0 2 2v9h-5v-6H12v6z" fill="#9ed4ee" stroke="#5098c0" />
        </Svg>
      </button>
      <div className="ml-[14px] flex gap-[3px]">
        <button type="button" aria-label="Console de gestion" className={`${open} bg-linear-to-b from-[#bccfe6] to-[#8fadd0]`}>
          <Svg w={32} h={32}><path d="M4 1h27v27l-3 3H1V4z" fill="#4a76c8" stroke="#3c66b4" /><path d="M4 1h27v14z" fill="#6a92da" /><path d="M10 9h12v14H10z" fill="#e8e6dc" /><path d="M9 10h14M10 23h12" stroke="#5a4a3c" strokeWidth="2.500" /><path d="M11 16h10M11 19h10" stroke="#b8b4a4" strokeWidth="2" /><path d="M5 5h7L5 12z" fill="#1a9030" /><path d="M27 5h-7l7 7z" fill="#182e78" /><path d="M5 27h7l-7-7z" fill="#c02020" /><path d="M27 27h-7l7-7z" fill="#f0c030" /></Svg>
        </button>
        <button type="button" aria-label="Machine virtuelle" className={`${open} bg-linear-to-b from-[#cfdded] to-[#a9c1de]`}>
          <Svg w={32} h={24}><rect x="1" y="1" width="30" height="22" rx="2" fill="#f4fbff" stroke="#1287b4" strokeWidth="2" /><path d="M4.500 4.500h9v6h-9zM6.500 6.500h9v6h-9zM8.500 8.500h8v6h-8z" fill="#d6eef8" stroke="#1578a4" /><path d="M11 11.500h3M12.500 10v3" stroke="#1578a4" /><path d="M17 20l5-5v5zM23 20l5-7v7z" fill="#1578a4" /></Svg>
        </button>
        <button type="button" aria-label="Studio OLAP" className={`${open} bg-linear-to-b from-[#bccfe6] to-[#8fadd0]`}>
          <Svg w={32} h={32}><path d="M4 1h27v27l-3 3H1V4z" fill="#4673c6" stroke="#3c66b4" /><path d="M4 1h27v14z" fill="#6a92da" /><path d="M2 14.500h28" stroke="#e0a028" strokeWidth="2.500" /><path d="M5 3l8 8M19 18l9 10" stroke="#d02030" strokeWidth="5" /><path d="M28 3l-8 8M13 18L4 28" stroke="#30a848" strokeWidth="5" /><circle cx="16" cy="15" r="4.500" fill="#2452b8" /></Svg>
        </button>
        <button type="button" aria-label="SAS Enterprise Guide" className={`${open} bg-linear-to-b from-[#f1f5fa] to-[#c9d8ea]`}><IcSas s={31} /></button>
      </div>
      <div className="ml-auto flex h-full items-center bg-linear-to-r from-transparent to-[#8193a9] to-25% pl-[44px] text-[11px] text-white">
        <button type="button" aria-label="Icônes cachées"><Svg w={9} h={5}><path d="M0 5h9L4.500 0z" fill="#fff" /></Svg></button>
        <span className="ml-3"><Svg w={16} h={16}><path d="M2 1v14" stroke="#fff" strokeWidth="2" /><path d="M3.500 2.500h5v1.500h6.500l-2 3 1 2H8.500V8h-5z" fill="#fff" stroke="#5b6878" strokeWidth=".6" /></Svg></span>
        <span className="ml-2"><Svg w={16} h={16}><path d="M5 4.500h10v8H5z" fill="#7f92a8" stroke="#fff" strokeWidth="1.300" /><path d="M7 15h7M2.500 1v2h-1v3h4V3h-1V1M3.500 6v7H6" stroke="#fff" fill="none" strokeWidth="1.200" /></Svg></span>
        <span className="ml-2"><Svg w={16} h={16}><path d="M1 5h2l4-4v14l-4-4H1z" fill="#fff" /><path d="M9 5c1 2 1 4 0 6M11 3c2 3 2 7 0 10M13 2c3 4 3 8 0 12" stroke="#fff" fill="none" /></Svg></span>
        <time className="mr-1 ml-2.5 w-[74px] text-center leading-[17px]">11:17<br />06/06/2012</time>
        <span className="h-full w-[14px] border-l border-[#4d5d70] bg-linear-to-b from-[#b4c1d0] via-[#66788d] to-[#8293a8]" />
      </div>
    </div>
  );
}

export default function App() {
  return (
    <div className={`flex h-screen flex-col bg-[#f0f0f0] text-black ${SEGOE}`}>
      <TitleBar />
      <MenuBar />
      <main className="flex min-h-0 flex-1 gap-[5px]">
        <LeftColumn />
        <div className="flex min-w-0 flex-1 flex-col">
          <div className="flex h-[25px] shrink-0 items-center pr-2 pb-0.5 pl-[5px]">
            <button type="button" className="flex items-center gap-2 text-[11px] leading-4">CUBE20120606101625<Caret /></button>
            <button type="button" aria-label="Fermer la vue" className="ml-auto"><Cross /></button>
          </div>
          <div className="flex min-h-0 flex-1 flex-col border border-[#606060]">
            <ViewToolbar />
            <div className="flex min-h-0 flex-1">
              <DimensionsPanel />
              <ChartPanel />
            </div>
          </div>
        </div>
      </main>
      <StatusBar />
      <Taskbar />
    </div>
  );
}
